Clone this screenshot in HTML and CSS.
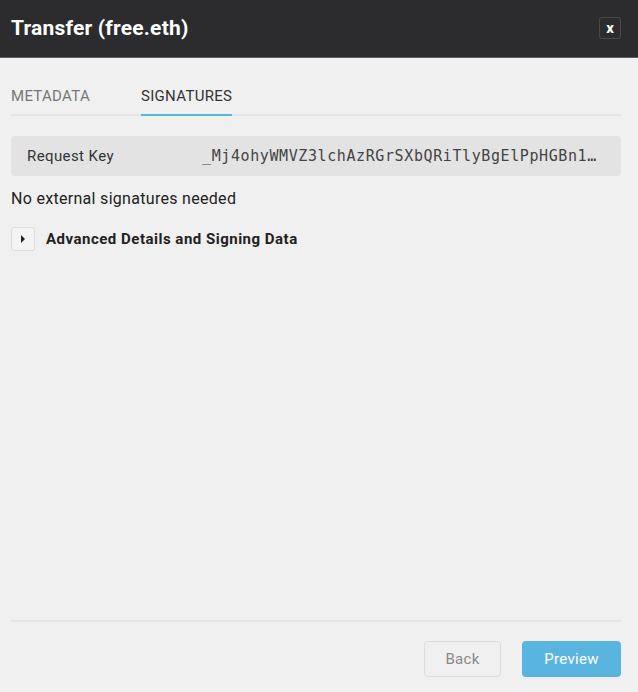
FILE: index.html
```html
<!DOCTYPE html>
<html lang="en">
<head>
  <meta charset="UTF-8" />
  <title>Transfer (free.eth)</title>
  <link rel="stylesheet" href="styles.css">
</head>
<body>
  <div class="modal">
    <header class="modal-header">
      <h1>Transfer (free.eth)</h1>
      <button class="close-btn">x</button>
    </header>

    <main class="modal-body">
      <nav class="tabs">
        <span class="tab">METADATA</span>
        <span class="tab active">SIGNATURES</span>
      </nav>

      <div class="key-box">
        <span class="key-label">Request Key</span>
        <span class="key-value">_Mj4ohyWMVZ3lchAzRGrSXbQRiTlyBgElPpHGBn1…</span>
      </div>

      <p class="note">No external signatures needed</p>

      <div class="advanced">
        <button class="toggle">
          <svg width="6" height="8" viewBox="0 0 6 8"><path d="M1 0 L5 4 L1 8 Z" fill="#222"/></svg>
        </button>
        <span>Advanced Details and Signing Data</span>
      </div>
    </main>

    <footer class="modal-footer">
      <button class="btn btn-back">Back</button>
      <button class="btn btn-preview">Preview</button>
    </footer>
  </div>
</body>
</html>
```

FILE: styles.css
```css
body {
  margin: 0;
  padding: 0;
  background: #f0f0f0;
  font-family: 'Roboto', 'Noto Sans', sans-serif;
  color: #222;
}

.modal {
  height: 692px;
  display: flex;
  flex-direction: column;
}

.modal-header {
  background-color: #2c2c2e;
  height: 58px;
  border-bottom: 1px solid #5a5a5a;
  display: flex;
  align-items: center;
  justify-content: space-between;
  padding: 0 17px 0 11px;
  box-sizing: border-box;
}

.modal-header h1 {
  margin: 0;
  color: #fff;
  font-size: 21px;
  font-weight: 700;
  letter-spacing: 0.2px;
  margin-top: -2px;
}

.close-btn {
  width: 22px;
  height: 22px;
  padding: 0;
  background: transparent;
  border: 1px solid #4a4a4c;
  border-radius: 3px;
  color: #fff;
  font-family: 'Roboto', sans-serif;
  font-weight: 700;
  font-size: 15px;
  line-height: 18px;
  margin-top: -2px;
}

.modal-body {
  flex-grow: 1;
  padding: 0 17px 0 11px;
}

.tabs {
  display: flex;
  gap: 51px;
  margin-top: 27px;
  border-bottom: 2px solid #e4e4e4;
}

.tab {
  font-size: 15px;
  letter-spacing: 0.3px;
  color: #777;
  padding: 2px 0 9px;
  margin-bottom: -2px;
  border-bottom: 2px solid transparent;
}

.tab.active {
  color: #333;
  border-bottom-color: #5ab4e0;
}

.key-box {
  margin-top: 20px;
  background: #e3e3e3;
  border-radius: 4px;
  height: 40px;
  display: flex;
  align-items: center;
  padding: 0 16px 0 16px;
  font-size: 15px;
  letter-spacing: 0.4px;
}

.key-label {
  width: 175px;
  flex-shrink: 0;
  color: #333;
}

.key-value {
  font-family: 'DejaVu Sans Mono', monospace;
  font-size: 15px;
  line-height: 22px;
  letter-spacing: 0.6px;
  color: #444;
  white-space: nowrap;
  overflow: hidden;
  text-overflow: ellipsis;
}

.note {
  margin: 13px 0 0;
  font-size: 16px;
  letter-spacing: 0.3px;
  color: #222;
}

.advanced {
  margin-top: 19px;
  display: flex;
  align-items: center;
  gap: 11px;
  font-size: 15px;
  font-weight: 700;
  letter-spacing: 0.5px;
  color: #222;
}

.toggle {
  width: 24px;
  height: 24px;
  padding: 0;
  background: #f4f4f4;
  border: 1px solid #dcdcdc;
  border-radius: 3px;
  display: flex;
  align-items: center;
  justify-content: center;
}

.modal-footer {
  margin: 0 17px 15px 11px;
  border-top: 2px solid #e4e4e4;
  padding-top: 19px;
  display: flex;
  justify-content: flex-end;
  gap: 21px;
}

.btn {
  height: 36px;
  border-radius: 4px;
  font-family: 'Roboto', sans-serif;
  font-size: 15px;
  letter-spacing: 0.3px;
  cursor: pointer;
}

.btn-back {
  width: 77px;
  background: transparent;
  border: 1px solid #dcdcdc;
  color: #888;
}

.btn-preview {
  width: 99px;
  background: #5ab4e0;
  border: none;
  color: #fff;
}
```
